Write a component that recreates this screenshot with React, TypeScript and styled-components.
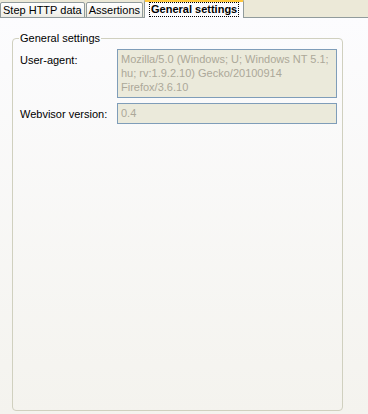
import styled, { createGlobalStyle } from "styled-components";

const Global = createGlobalStyle`
    html, body {
        margin: 0;
        padding: 0;
        background: #ece9d8;
    }
    body {
        font-family: Tahoma, "Liberation Sans", Arial, sans-serif;
        font-size: 11px;
        color: #000;
    }
`;

interface TabProps {
    active?: boolean;
}

const Window = styled.div`
    width: 368px;
    height: 414px;
    display: flex;
    flex-direction: column;
    background: #ece9d8;
    overflow: hidden;
`;

const TabStrip = styled.div`
    display: flex;
    align-items: flex-end;
    height: 18px;
    position: relative;
    z-index: 1;
`;

const Tab = styled.div<TabProps>`
    box-sizing: border-box;
    height: ${({ active }) => (active ? "19px" : "16px")};
    padding: ${({ active }) => (active ? "1px 5px 0 5px" : "1px 2px 0 2px")};
    margin-right: ${({ active }) => (active ? "0" : "1px")};
    display: flex;
    align-items: flex-start;
    border: 1px solid #919b9c;
    border-bottom: ${({ active }) => (active ? "none" : "1px solid #919b9c")};
    border-top: ${({ active }) => (active ? "3px solid #ffc83c" : "1px solid #919b9c")};
    background: ${({ active }) =>
        active ? "#fcfcfe" : "linear-gradient(#ffffff, #f3f3ef 70%, #ecebe4)"};
    font-weight: ${({ active }) => (active ? "bold" : "normal")};
    border-radius: 2px 2px 0 0;
    white-space: nowrap;
    line-height: 13px;
`;

const Focus = styled.span`
    outline: 1px dotted #000;
    outline-offset: 0;
    padding: 0 1px;
`;

const Page = styled.div`
    flex: 1;
    margin-top: -1px;
    border-top: 1px solid #919b9c;
    background: linear-gradient(#fcfcfe, #f4f3ee);
    padding: 14px 25px 3px 12px;
    display: flex;
`;

const Group = styled.fieldset`
    flex: 1;
    margin: 0;
    border: 1px solid #d0d0bf;
    border-radius: 4px;
    padding: 4px 5px 0 7px;
    display: flex;
    flex-direction: column;
    gap: 5px;
`;

const Legend = styled.legend`
    padding: 0 1px;
    margin-left: -1px;
    font-size: 11px;
    line-height: 13px;
`;

const Row = styled.div`
    display: flex;
    align-items: flex-start;
`;

const Label = styled.div`
    width: 97px;
    padding-top: 5px;
    line-height: 13px;
`;

const Field = styled.div<{ lines: number }>`
    box-sizing: border-box;
    width: 220px;
    height: ${({ lines }) => lines * 14 + 7}px;
    border: 1px solid #7f9db9;
    background: #ebeadb;
    color: #aca899;
    padding: 2px 3px;
    line-height: 14px;
`;

export default function App() {
    return (
        <Window>
            <Global />
            <TabStrip>
                <Tab>Step HTTP data</Tab>
                <Tab>Assertions</Tab>
                <Tab active>
                    <Focus>General settings</Focus>
                </Tab>
            </TabStrip>
            <Page>
                <Group>
                    <Legend>General settings</Legend>
                    <Row>
                        <Label>User-agent:</Label>
                        <Field lines={3}>
                            Mozilla/5.0 (Windows; U; Windows NT 5.1;
                            <br />
                            hu; rv:1.9.2.10) Gecko/20100914
                            <br />
                            Firefox/3.6.10
                        </Field>
                    </Row>
                    <Row>
                        <Label>Webvisor version:</Label>
                        <Field lines={1}>0.4</Field>
                    </Row>
                </Group>
            </Page>
        </Window>
    );
}
